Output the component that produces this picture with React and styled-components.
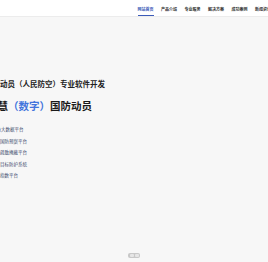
import React from 'react'
import styled, { createGlobalStyle } from 'styled-components'

const Global = createGlobalStyle`
  html, body { margin: 0; padding: 0; }
  body {
    background: #f7f7f7;
    font-family: "Noto Sans CJK SC", "Noto Sans", sans-serif;
    overflow: hidden;
  }
`

const Page = styled.div`
  width: 268px;
  height: 262px;
  display: flex;
  flex-direction: column;
  overflow: hidden;
`

const Header = styled.header`
  height: 17px;
  background: #fff;
  border-bottom: 1px solid #ececec;
  display: flex;
  align-items: stretch;
  padding-left: 137.5px;
  box-sizing: border-box;
  flex-shrink: 0;
`

const NavItem = styled.a`
  flex: 0 0 auto;
  width: 23.5px;
  font-size: 4px;
  line-height: 4px;
  font-weight: 700;
  white-space: nowrap;
  color: ${p => (p.active ? '#3c5bb8' : '#333')};
  display: flex;
  align-items: center;
  position: relative;
  padding-top: 1px;
  &::after {
    content: '';
    display: ${p => (p.active ? 'block' : 'none')};
    position: absolute;
    left: 0;
    bottom: 0;
    width: 16px;
    height: 1px;
    background: #3c5bb8;
  }
`

const Hero = styled.section`
  flex: 1;
  display: flex;
  flex-direction: column;
  padding-top: 62px;
  position: relative;
`

const SubTitle = styled.div`
  font-size: 7.5px;
  line-height: 9px;
  font-weight: 600;
  color: #222;
  white-space: nowrap;
  margin-left: -15px;
`

const Title = styled.h1`
  margin: 11px 0 0 -13px;
  font-size: 10.5px;
  line-height: 14px;
  font-weight: 700;
  color: #1a1a1a;
  white-space: nowrap;
  span { color: #4274dc; }
`

const List = styled.ul`
  list-style: none;
  margin: 14px 0 0 -8px;
  padding: 0;
  display: flex;
  flex-direction: column;
  gap: 6.6px;
`

const Item = styled.li`
  font-size: 4.5px;
  line-height: 5px;
  color: #3b4a6b;
  white-space: nowrap;
  margin-left: ${p => p.shift || 0}px;
`

const Dots = styled.div`
  position: absolute;
  left: 128px;
  bottom: 4px;
  width: 12px;
  height: 5px;
  border-radius: 2px;
  background: #c8c8c8;
  display: flex;
  align-items: center;
  justify-content: center;
  gap: 1px;
  span {
    width: 4px;
    height: 3px;
    border-radius: 1px;
    background: #e6e6e6;
  }
`

const nav = ['网站首页', '产品介绍', '专业服务', '解决方案', '成功案例', '新闻资讯']
const items = [
  ['人防大数据平台', 0],
  ['人防国防预案平台', -1],
  ['人防疏散掩蔽平台', -1],
  ['人防目标防护系统', -1],
  ['人防指数平台', -1],
]

export default function App() {
  return (
    <Page>
      <Global />
      <Header>
        {nav.map((n, i) => (
          <NavItem key={n} active={i === 0}>{n}</NavItem>
        ))}
      </Header>
      <Hero>
        <SubTitle>国防动员（人民防空）专业软件开发</SubTitle>
        <Title>智慧<span>（数字）</span>国防动员</Title>
        <List>
          {items.map(([t, s]) => (
            <Item key={t} shift={s}>{t}</Item>
          ))}
        </List>
        <Dots><span /><span /></Dots>
      </Hero>
    </Page>
  )
}
